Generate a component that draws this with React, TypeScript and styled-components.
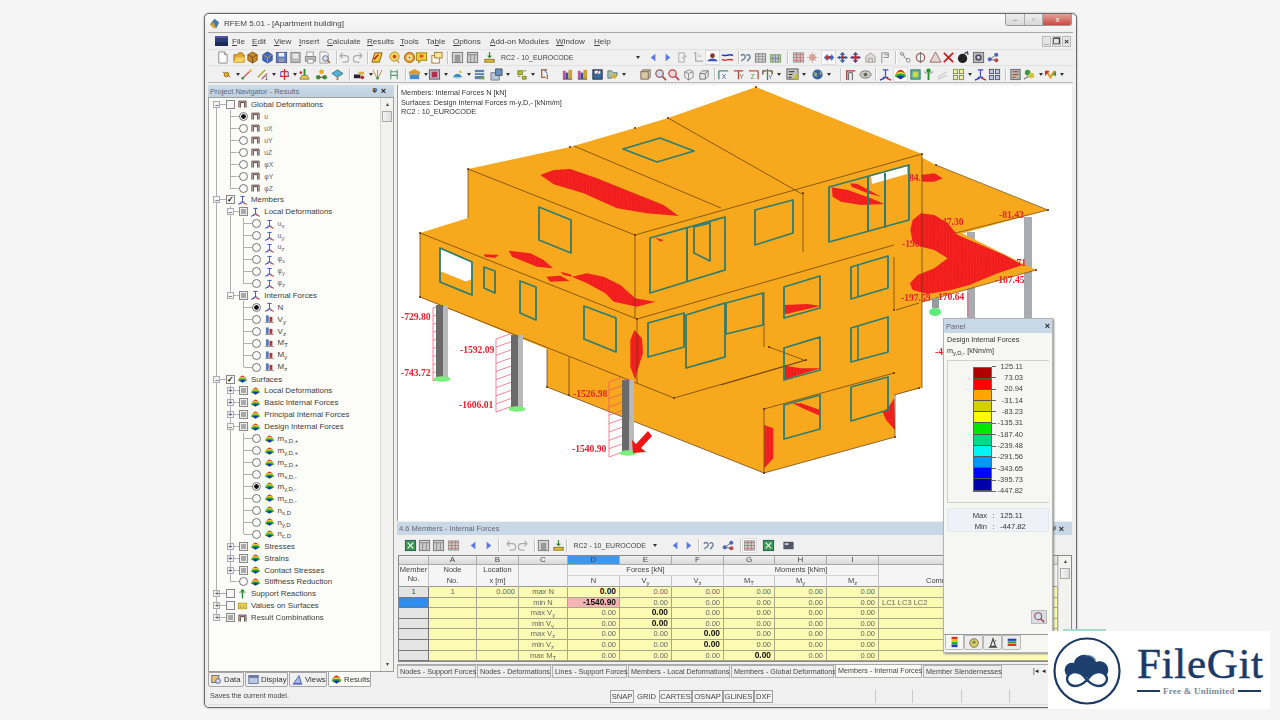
import React from "react";
import styled, { createGlobalStyle } from "styled-components";

const Global = createGlobalStyle`
  html, body { margin: 0; padding: 0; background: #f5f5f5; }
  * { box-sizing: border-box; }
`;

const Root = styled.div`
  position: relative;
  width: 1280px;
  height: 720px;
  overflow: hidden;
  padding: 13px 0 0 204px;
  font-family: "Liberation Sans", Arial, sans-serif;
  color: #333;
  filter: blur(0.3px);
`;
const Win = styled.div`
  width: 873px;
  height: 695px;
  border: 1px solid #6a6a6a;
  border-radius: 5px;
  background: #f0f0f0;
  display: flex;
  flex-direction: column;
  box-shadow: 0 0 2px #999;
`;
const TitleBar = styled.div`
  height: 18px;
  flex: none;
  display: flex;
  align-items: center;
  background: linear-gradient(#fbfbfb, #efefef);
  border-radius: 5px 5px 0 0;
  padding: 0 4px 0 3px;
  font-size: 8.1px;
  gap: 3px;
`;
const TitleIcon = styled.svg`
  width: 13px;
  height: 13px;
  flex: none;
`;
const TitleText = styled.span`
  flex: 1;
  color: #444;
`;
const Caption = styled.div`
  width: 67px;
  height: 12px;
  margin-top: -6px;
  display: flex;
  border: 1px solid #999;
  border-top: 0;
  border-radius: 0 0 3px 3px;
  overflow: hidden;
`;
const CapBtn = styled.span<{ $w: number; $red?: boolean }>`
  width: ${(p) => p.$w}px;
  flex: none;
  background: ${(p) => (p.$red ? "linear-gradient(#e8a09a,#c84a3e)" : "linear-gradient(#eee,#d8d8d8)")};
  border-right: 1px solid #aaa;
  color: ${(p) => (p.$red ? "#fff" : "#777")};
  font-size: 8px;
  line-height: 11px;
  text-align: center;
`;
const Inner = styled.div`
  flex: 1;
  min-height: 0;
  margin: 0 3px 0 3px;
  border-top: 1px solid #a8a8a8;
  display: flex;
  flex-direction: column;
`;
const MenuBar = styled.div`
  height: 16px;
  flex: none;
  display: flex;
  align-items: center;
  font-size: 8.1px;
  color: #444;
  padding-left: 7px;
`;
const MenuLogo = styled.span`
  width: 13px;
  height: 10px;
  background: linear-gradient(#2a3f7a 50%, #1c2a55 50%);
  border-top: 2px solid #55a;
  margin-right: 4px;
  flex: none;
`;
const MenuItem = styled.span<{ $w: number }>`
  width: ${(p) => p.$w}px;
  flex: none;
  white-space: nowrap;
  u { text-decoration: underline; }
`;
const MdiBtns = styled.div`
  margin-left: auto;
  display: flex;
  gap: 1px;
  margin-right: 2px;
`;
const MdiBtn = styled.span`
  width: 9px;
  height: 11px;
  background: #e4e4e4;
  border: 1px solid #bbb;
  font-size: 8px;
  line-height: 9px;
  text-align: center;
  color: #222;
  font-weight: bold;
`;
const ToolRow = styled.div<{ $h: number }>`
  height: ${(p) => p.$h}px;
  flex: none;
  display: flex;
  align-items: center;
  border-top: 1px solid #e2e2e2;
`;
const ToolSet = styled.div`
  display: flex;
  align-items: center;
  flex: none;
`;
const ToolSlot = styled.span<{ $on?: boolean }>`
  width: 13px;
  height: 13px;
  flex: none;
  display: block;
  background: ${(p) => (p.$on ? "#fbfbfb" : "transparent")};
  box-shadow: ${(p) => (p.$on ? "0 0 0 1px #ddd" : "none")};
  svg { display: block; width: 13px; height: 13px; }
`;
const Drop = styled.span`
  width: 0;
  height: 0;
  flex: none;
  border: 2px solid transparent;
  border-top: 3px solid #333;
  border-bottom: 0;
`;
const Sep = styled.span`
  width: 2px;
  height: 13px;
  flex: none;
  background: #c6c6c6;
  border-right: 1px solid #fff;
`;
const Combo = styled.div<{ $w: number }>`
  width: ${(p) => p.$w}px;
  height: 13px;
  flex: none;
  display: flex;
  align-items: center;
  justify-content: space-between;
  font-size: 7px;
  white-space: nowrap;
  color: #444;
  padding: 0 4px 0 5.5px;
`;

const Work = styled.div`
  flex: 1;
  min-height: 0;
  display: flex;
  gap: 3px;
  padding-top: 2px;
  border-top: 1px solid #b8b8b8;
`;
const Nav = styled.div`
  width: 186px;
  flex: none;
  display: flex;
  flex-direction: column;
`;
const NavHead = styled.div`
  height: 12px;
  flex: none;
  background: linear-gradient(#ccdbe8, #bfd0df);
  color: #667;
  font-size: 7.5px;
  display: flex;
  align-items: center;
  justify-content: space-between;
  padding: 0 4px 0 2px;
  b { color: #222; font-size: 9px; letter-spacing: 4px; }
`;
const TreeBox = styled.div`
  flex: 1;
  min-height: 0;
  background: #fcfcf8;
  border: 1px solid #a0a0a0;
  border-bottom: 0;
  display: flex;
`;
const Tree = styled.div`
  flex: 1;
  padding: 0.5px 0 0 1.3px;
  min-width: 0;
  font-size: 7.9px;
  color: #3c3c3c;
`;
const TreeRow = styled.div`
  height: 11.95px;
  display: flex;
  align-items: center;
  white-space: nowrap;
`;
const lineV = "linear-gradient(#b0b0b0,#b0b0b0)";
const cellBg: Record<string, string> = {
  v: `${lineV} 50% 0/1px 100% no-repeat`,
  T: `${lineV} 50% 0/1px 100% no-repeat, ${lineV} 100% 50%/50% 1px no-repeat`,
  L: `${lineV} 50% 0/1px 50% no-repeat, ${lineV} 100% 50%/50% 1px no-repeat`,
  m: `${lineV} 50% 0/1px 100% no-repeat, ${lineV} 100% 50%/50% 1px no-repeat`,
  p: `${lineV} 50% 0/1px 100% no-repeat, ${lineV} 100% 50%/50% 1px no-repeat`,
  M: `${lineV} 50% 100%/1px 50% no-repeat, ${lineV} 100% 50%/50% 1px no-repeat`,
  P: `${lineV} 50% 0/1px 50% no-repeat, ${lineV} 100% 50%/50% 1px no-repeat`,
  q: `${lineV} 50% 0/1px 50% no-repeat, ${lineV} 100% 50%/50% 1px no-repeat`,
  c: `${lineV} 0 50%/50% 1px no-repeat`,
  n: `${lineV} 0 50%/50% 1px no-repeat`,
  b: `${lineV} 0 50%/50% 1px no-repeat`,
  r: `${lineV} 0 50%/50% 1px no-repeat`,
  R: `${lineV} 0 50%/50% 1px no-repeat`,
  e: "none",
};
const TreeCell = styled.span<{ $t: string }>`
  width: 13.33px;
  height: 100%;
  flex: none;
  display: flex;
  align-items: center;
  justify-content: center;
  background: ${(p) => cellBg[p.$t]};
`;
const Expander = styled.span`
  width: 7px;
  height: 7px;
  border: 1px solid #aab;
  background: #f4f4f4;
  color: #667;
  font-size: 7px;
  line-height: 5px;
  text-align: center;
  font-weight: bold;
`;
const CheckBox = styled.span`
  width: 9px;
  height: 9px;
  border: 1px solid #8a8a8a;
  background: #f6f6f6;
  font-size: 8px;
  line-height: 7px;
  text-align: center;
  color: #111;
  font-weight: bold;
`;
const GrayBox = styled(CheckBox)`
  background: #a8a8a8;
  box-shadow: inset 0 0 0 1px #eee;
`;
const Radio = styled.span<{ $on?: boolean }>`
  width: 9px;
  height: 9px;
  border-radius: 50%;
  border: 1px solid #777;
  background: ${(p) => (p.$on ? "radial-gradient(circle,#111 0 2px,#f6f6f6 2.5px)" : "#fafafa")};
`;
const TreeIcon = styled.span`
  width: 11px;
  height: 10px;
  margin-right: 3px;
  flex: none;
  svg { display: block; width: 11px; height: 10px; }
`;
const TreeLabel = styled.span<{ $small?: boolean }>`
  font-size: ${(p) => (p.$small ? "6.8px" : "inherit")};
  color: ${(p) => (p.$small ? "#666" : "inherit")};
`;
const Sub = styled.span`
  font-size: 6px;
  vertical-align: -1.5px;
`;
const Scroll = styled.div`
  width: 13px;
  flex: none;
  background: #f2f2f0;
  border-left: 1px solid #d8d8d8;
  display: flex;
  flex-direction: column;
  align-items: center;
  padding: 3px 0;
  font-size: 6px;
  color: #444;
  line-height: 7px;
`;
const Thumb = styled.span`
  width: 10px;
  height: 11px;
  background: linear-gradient(90deg, #f4f4f4, #dcdcdc);
  border: 1px solid #aaa;
  margin-top: 3px;
`;
const ScrollEnd = styled.span`
  margin-top: auto;
`;
const NavTabs = styled.div`
  height: 17px;
  flex: none;
  display: flex;
  border-top: 1px solid #999;
  gap: 1px;
`;
const NavTab = styled.div<{ $w: number; $on?: boolean }>`
  width: ${(p) => p.$w}px;
  height: 15px;
  flex: none;
  display: flex;
  align-items: center;
  gap: 2px;
  font-size: 7.8px;
  padding-left: 2px;
  border: 1px solid #a5a5a5;
  border-top: ${(p) => (p.$on ? "0" : "1px solid #a5a5a5")};
  border-radius: 0 0 2px 2px;
  background: ${(p) => (p.$on ? "#fcfcf8" : "#f0f0f0")};
  svg { width: 11px; height: 11px; flex: none; }
`;

const Main = styled.div`
  width: 675px;
  flex: none;
  display: flex;
  flex-direction: column;
`;
const Viewport = styled.div`
  height: 436px;
  flex: none;
  background: #fff;
  border-left: 1px solid #9a9a9a;
  position: relative;
  overflow: hidden;
`;
const Scene = styled.svg`
  display: block;
  width: 675px;
  height: 436px;
`;
const ViewInfo = styled.div`
  position: absolute;
  left: 3px;
  top: 3px;
  font-size: 7.3px;
  line-height: 9.5px;
  color: #333;
`;
const TableHead = styled.div`
  height: 13px;
  margin-top: 1px;
  flex: none;
  background: #c8d8e6;
  color: #667;
  font-size: 7.5px;
  display: flex;
  align-items: center;
  justify-content: space-between;
  padding: 0 5px 0 2px;
  b { color: #222; font-size: 9px; letter-spacing: 3px; }
`;
const TableTools = styled.div`
  height: 20px;
  flex: none;
  display: flex;
  align-items: center;
`;
const TableWrap = styled.div`
  height: 107px;
  flex: none;
  display: flex;
  border: 1px solid #888;
  background: #fff;
  margin-left: 1px;
  overflow: hidden;
`;
const Sheet = styled.div`
  flex: 1;
  min-width: 0;
  font-size: 7.5px;
  color: #444;
`;
const COLS = "30px 48px 42px 49px 52px 52px 52px 51px 52px 52px 1fr";
const HeadGrid = styled.div`
  display: grid;
  grid-template-columns: ${COLS};
  grid-template-rows: 9px 11px 11px;
  background: #f5f5f5;
  border-bottom: 1px solid #999;
  height: 31px;
`;
const Letter = styled.div<{ $on?: boolean }>`
  grid-row: 1;
  background: ${(p) => (p.$on ? "#3d97ea" : "linear-gradient(#f0f0f0,#d9d9d9)")};
  border-right: 1px solid #aaa;
  border-bottom: 1px solid #aaa;
  text-align: center;
  line-height: 8px;
  font-size: 8px;
`;
const HeadCell = styled.div<{ $c: string; $r: string; $b?: boolean; $tight?: boolean }>`
  grid-column: ${(p) => p.$c};
  grid-row: ${(p) => p.$r};
  border-right: 1px solid #c4c4c4;
  ${(p) => (p.$b ? "border-bottom: 1px solid #d4d4d4;" : "")}
  text-align: center;
  line-height: ${(p) => (p.$tight ? "8.5px" : "10.5px")};
  padding-top: ${(p) => (p.$tight ? "1px" : "0")};
  white-space: nowrap;
  overflow: hidden;
`;
const CommentHead = styled(HeadCell)`
  text-align: left;
  padding-left: 47px;
`;
const DataRow = styled.div`
  display: grid;
  grid-template-columns: ${COLS};
  height: 10.6px;
`;
const RowHead = styled.div<{ $sel?: boolean }>`
  background: ${(p) => (p.$sel ? "#2f8ff0" : "#e4e4e4")};
  border-right: 1px solid #777;
  border-bottom: 1px solid #777;
  text-align: center;
  line-height: 9.6px;
`;
const DataCell = styled.div<{ $a?: string; $bold?: boolean; $pink?: boolean }>`
  background: ${(p) => (p.$pink ? "#f5b4b4" : "#fbfbb4")};
  border-right: 1px solid #a8a890;
  border-bottom: 1px solid #a8a890;
  text-align: ${(p) => p.$a || "right"};
  padding: 0 3px;
  line-height: 9.6px;
  font-size: ${(p) => (p.$bold ? "8.4px" : "7.5px")};
  font-weight: ${(p) => (p.$bold ? "bold" : "normal")};
  color: ${(p) => (p.$bold ? "#111" : "#666")};
  white-space: nowrap;
  overflow: hidden;
`;
const GridScroll = styled(Scroll)`
  width: 13px;
  padding-top: 2px;
`;
const SheetTabs = styled.div`
  height: 15px;
  flex: none;
  margin-top: 2px;
  display: flex;
  align-items: stretch;
  font-size: 7.2px;
  color: #444;
  gap: 1px;
  border-top: 1px solid #aaa;
`;
const SheetTab = styled.div<{ $w: number; $on?: boolean }>`
  width: ${(p) => p.$w}px;
  flex: none;
  height: 13px;
  line-height: 11px;
  white-space: nowrap;
  padding-left: 2px;
  border: 1px solid #b0b0b0;
  border-top: ${(p) => (p.$on ? "0" : "1px solid #b0b0b0")};
  background: ${(p) => (p.$on ? "#f8f8f4" : "#eeeeee")};
`;
const SheetNav = styled.div`
  margin-left: 30px;
  display: flex;
  gap: 3px;
  font-size: 7px;
  line-height: 12px;
  color: #222;
`;
const StatusBar = styled.div`
  height: 17px;
  flex: none;
  margin-top: auto;
  display: flex;
  align-items: center;
  font-size: 7.1px;
  color: #444;
  margin-bottom: 2px;
  border-bottom: 1px solid #ddd;
`;
const StatusText = styled.span`
  width: 402px;
  flex: none;
  padding-left: 2px;
`;
const StatusBtn = styled.span<{ $w: number; $flat?: boolean }>`
  width: ${(p) => p.$w}px;
  height: 13px;
  flex: none;
  text-align: center;
  line-height: 11px;
  font-size: 7.6px;
  border: 1px solid ${(p) => (p.$flat ? "transparent" : "#a0a0a0")};
  background: #f4f4f4;
`;
const StatusCell = styled.span<{ $w: number }>`
  width: ${(p) => p.$w}px;
  height: 13px;
  flex: none;
  border-right: 1px solid #c8c8c8;
`;

const Panel = styled.div`
  position: absolute;
  left: 943px;
  top: 318px;
  width: 110px;
  height: 335px;
  background: #f6f6f2;
  border: 1px solid #b4b4b4;
  box-shadow: 1px 1px 2px #888;
  display: flex;
  flex-direction: column;
`;
const PanelHead = styled.div`
  height: 14px;
  flex: none;
  background: #c8d8e6;
  color: #667;
  font-size: 7.6px;
  display: flex;
  align-items: center;
  justify-content: space-between;
  padding: 0 2px 0 2px;
  b { color: #222; font-size: 9px; }
`;
const PanelTitle = styled.div`
  padding: 1px 3px 0;
  font-size: 7.2px;
  line-height: 11px;
  color: #333;
  flex: none;
`;
const LegendBox = styled.div`
  height: 143px;
  margin: 1px 3px 0;
  flex: none;
  border: 1px solid #d0d0d0;
  border-right: 0;
  padding: 6px 0 0 25px;
  display: flex;
  gap: 0;
`;
const Bars = styled.div`
  width: 19px;
  height: 125px;
  border: 1px solid #666;
  display: flex;
  flex-direction: column;
  flex: none;
  margin-top: 0;
`;
const Bar = styled.div<{ $c: string }>`
  flex: 1;
  background: ${(p) => p.$c};
  border-bottom: 0.5px solid #555;
`;
const Values = styled.div`
  width: 45px;
  height: 135px;
  margin-top: -5px;
  display: flex;
  flex-direction: column;
  justify-content: space-between;
  flex: none;
  font-size: 7.5px;
  color: #444;
`;
const Value = styled.div`
  height: 10px;
  line-height: 10px;
  text-align: right;
  padding-right: 14px;
  white-space: nowrap;
  background: linear-gradient(#666, #666) 0 50%/4px 1px no-repeat;
`;
const MaxMin = styled.div`
  margin: 5px 3px 0;
  height: 24px;
  flex: none;
  background: #eef2f8;
  border: 1px solid #e4e8ee;
  display: grid;
  grid-template-columns: 39px 13px 1fr;
  font-size: 7.6px;
  line-height: 11px;
  padding-top: 1px;
  text-align: right;
  span:nth-child(3n) { text-align: left; }
  span:nth-child(3n + 2) { text-align: center; }
`;
const PanelFoot = styled.div`
  margin-top: auto;
  flex: none;
  display: flex;
  flex-direction: column;
`;
const ZoomBtn = styled.div`
  align-self: flex-end;
  width: 16px;
  height: 14px;
  margin: 0 5px 10px 0;
  background: #d8dce4;
  border: 1px solid #bbb;
  svg { display: block; width: 14px; height: 12px; }
`;
const PanelTabs = styled.div`
  height: 16px;
  border-top: 1px solid #999;
  display: flex;
  padding-left: 1px;
  margin-bottom: 2px;
`;
const PanelTab = styled.div<{ $on?: boolean }>`
  width: 19px;
  height: 15px;
  flex: none;
  border: 1px solid #b8b8b8;
  border-top: ${(p) => (p.$on ? "0" : "1px solid #b8b8b8")};
  border-radius: 0 0 2px 2px;
  background: ${(p) => (p.$on ? "#f6f6f2" : "#ededed")};
  display: flex;
  align-items: center;
  justify-content: center;
  svg { width: 12px; height: 12px; }
`;

const LogoBox = styled.div`
  position: absolute;
  left: 1048px;
  top: 631px;
  width: 222px;
  height: 78px;
  background: #fff;
  display: flex;
  align-items: center;
  padding-left: 4px;
  &::before {
    content: "";
    position: absolute;
    left: 15px;
    top: -2px;
    width: 43px;
    height: 2px;
    background: #a5dccd;
  }
`;
const LogoMark = styled.svg`
  width: 70px;
  height: 70px;
  flex: none;
  margin-right: 15px;
`;
const LogoText = styled.div`
  color: #1b3a66;
  font-family: "Liberation Serif", serif;
  margin-top: -2px;
`;
const LogoName = styled.div`
  font-size: 43px;
  line-height: 44px;
  letter-spacing: 0.7px;
  -webkit-text-stroke: 0.5px #1b3a66;
`;
const LogoTag = styled.div`
  display: flex;
  align-items: center;
  gap: 3px;
  font-size: 9px;
  line-height: 11px;
  font-weight: bold;
  color: #7d8796;
  letter-spacing: 0.25px;
  i { width: 23px; height: 2px; background: #1b3a66; flex: none; }
`;

/* ------------- icons ------------- */
const icons: Record<string, React.ReactNode> = {
  doc: <><path d="M3 1h6l3 3v9H3z" fill="#fff" stroke="#888" /><path d="M9 1v3h3" fill="none" stroke="#888" /></>,
  folder: <><path d="M1 4h4l1-2h4v2h2v8H1z" fill="#e8a830" stroke="#a87818" /><path d="M1 12l2-5h10l-2 5z" fill="#f8d060" /></>,
  cube: <><path d="M2 4l5-3 5 3v6l-5 3-5-3z" fill="#c88828" stroke="#8a5a18" /><path d="M2 4l5 3 5-3M7 7v6" fill="none" stroke="#7a4a10" /></>,
  cubeb: <><path d="M2 4l5-3 5 3v6l-5 3-5-3z" fill="#4468c0" stroke="#2a4488" /><path d="M2 4l5 3 5-3M7 7v6" fill="none" stroke="#c8a030" /></>,
  save: <><rect x="1.5" y="1.5" width="11" height="11" fill="#5a80c8" stroke="#4a5a90" /><rect x="4" y="2" width="6" height="4" fill="#f0f0f0" /><rect x="4" y="8" width="6" height="4" fill="#99a" /></>,
  tray: <><rect x="2" y="1.5" width="10" height="11" fill="#bbb" stroke="#888" /><rect x="4" y="3" width="6" height="5" fill="#e8e8e8" /></>,
  print: <><rect x="3" y="1" width="7" height="5" fill="#f5f5f5" stroke="#999" /><rect x="1.5" y="6" width="11" height="5" fill="#bbb" stroke="#888" /><rect x="4" y="9" width="6" height="4" fill="#fff" stroke="#999" /></>,
  prev: <><path d="M2 1h7l2 2v10H2z" fill="#f4f4f4" stroke="#999" /><circle cx="8" cy="8" r="3" fill="#cfe0f5" stroke="#667" /><path d="M10 10l3 3" stroke="#a62" strokeWidth="1.5" /></>,
  undo: <path d="M3 5h6a3 3 0 010 7H6M3 5l3-3M3 5l3 3" fill="none" stroke="#aaa" strokeWidth="1.3" />,
  redo: <path d="M11 5H5a3 3 0 000 7h3M11 5L8 2M11 5L8 8" fill="none" stroke="#aaa" strokeWidth="1.3" />,
  pen: <><path d="M4 2h8l-3 10H1z" fill="#f0c838" stroke="#8a5a20" /><path d="M3 9l5-5" stroke="#c02020" strokeWidth="1.6" /></>,
  bubble: <><circle cx="7" cy="6" r="5" fill="#f0d860" stroke="#b09020" /><circle cx="7" cy="6" r="2" fill="#e04020" /><path d="M10 10l2 3" stroke="#a62" /></>,
  target: <><circle cx="7" cy="7" r="5.5" fill="#e8a030" stroke="#a06010" /><circle cx="7" cy="7" r="3" fill="#f8e8b0" /><circle cx="7" cy="7" r="1.2" fill="#7a8a20" /></>,
  note: <><rect x="1.5" y="2" width="11" height="8" fill="#f0d040" stroke="#a08010" /><path d="M4 10v3l3-3" fill="#f0d040" stroke="#a08010" /><rect x="5" y="4" width="4" height="3" fill="#e05020" /></>,
  win: <><rect x="2" y="5" width="8" height="8" fill="#fff" stroke="#a87828" /><rect x="5" y="1.5" width="8" height="6" fill="#f8e8a0" stroke="#a87828" /></>,
  tbl: <><rect x="1.5" y="1.5" width="11" height="11" fill="#d8d8d8" stroke="#777" /><rect x="4" y="4" width="6" height="8" fill="#999" /></>,
  tbl2: <><rect x="1.5" y="1.5" width="11" height="11" fill="#ccc" stroke="#777" /><path d="M1.5 4h11M5 4v8M9 4v8" stroke="#888" /></>,
  lc: <><path d="M7 1v6M5 5l2 2 2-2" stroke="#3a8a30" fill="none" strokeWidth="1.3" /><rect x="2" y="9" width="10" height="3" fill="#e8c040" stroke="#88701a" /></>,
  al: <path d="M9 3L4 7l5 4z" fill="#5a78e0" />,
  ar: <path d="M5 3l5 4-5 4z" fill="#5a78e0" />,
  page: <><path d="M3 2h6v10H3z" fill="#eee" stroke="#aaa" /><path d="M7 8l4-3" stroke="#bbb" strokeWidth="2" /></>,
  pageb: <><path d="M3 2h2v9h8" fill="none" stroke="#aaa" strokeWidth="1.3" /><text x="7" y="6" fontSize="4" fill="#999">1x</text></>,
  eye: <><circle cx="7" cy="5" r="2.5" fill="#8a3030" /><path d="M1 11c3-4 9-4 12 0z" fill="#3a50c0" /></>,
  wave: <><path d="M1 4c3 3 8-2 12 1" stroke="#2030c0" fill="none" strokeWidth="1.5" /><path d="M1 9c3 3 8-2 12 1" stroke="#d03030" fill="none" strokeWidth="1.5" /></>,
  link: <path d="M2 5c3-3 6 1 4 3s-3 1-3 3M8 5c2-2 4-1 4 2l-3 4" stroke="#6a7f9a" fill="none" strokeWidth="1.5" />,
  grid1: <><rect x="1.5" y="3" width="11" height="9" fill="#c8d4e8" stroke="#8a7a60" /><path d="M1.5 6h11M1.5 9h11M5 3v9M9 3v9" stroke="#8a7a60" strokeWidth=".6" /></>,
  grid2: <><rect x="1.5" y="4" width="11" height="8" fill="#b8c8e0" stroke="#7a5" /><path d="M4 4v8M7 4v8M10 4v8M1.5 8h11" stroke="#765" strokeWidth=".7" /></>,
  gridg: <><rect x="1.5" y="2" width="11" height="10" fill="#ccc" stroke="#999" /><path d="M1.5 4h11M1.5 7h11M1.5 10h11M5 2v10M9 2v10" stroke="#b33" strokeWidth=".5" /></>,
  sun: <><circle cx="7" cy="7" r="3" fill="#e8c8b0" stroke="#b88" /><path d="M7 1v12M1 7h12M3 3l8 8M11 3l-8 8" stroke="#c88" strokeWidth=".6" /></>,
  move: <><path d="M2 7l4-4v2h4V3l3 4-3 4V9H6v2z" fill="#3a68b8" /><circle cx="6" cy="7" r="2" fill="#d03030" /></>,
  mv2: <><path d="M7 1l3 3H8v2h2V5l3 2-3 2V8H8v2h2l-3 3-3-3h2V8H4v1L1 7l3-2v1h2V4H4z" fill="#3a5a98" /><circle cx="7" cy="7" r="1.5" fill="#c03030" /></>,
  mv3: <><path d="M7 1l3 3H8v2h2V5l3 2-3 2V8H8v2h2l-3 3-3-3h2V8H4v1L1 7l3-2v1h2V4H4z" fill="#5a3a78" /><circle cx="7" cy="7" r="2" fill="#d03030" /></>,
  house: <><path d="M2 12V6l5-4 5 4v6z" fill="#ddd" stroke="#a99" /><path d="M5 12V8h4v4" fill="none" stroke="#a99" /></>,
  flag: <><path d="M3 13V2h7v5H5" fill="#eee" stroke="#888" /><path d="M6 4h4" stroke="#888" /></>,
  curve: <><path d="M2 2c3 0 3 3 4 5s4 1 5 4" fill="none" stroke="#777" /><circle cx="3" cy="3" r="1.5" fill="#fff" stroke="#777" /><circle cx="10" cy="10" r="2" fill="#fff" stroke="#777" /></>,
  ring: <><circle cx="7" cy="7" r="4.5" fill="none" stroke="#a06060" strokeWidth="1.3" /><path d="M7 1v12" stroke="#707070" /></>,
  warn: <path d="M7 1l6 11H1z" fill="#e0d8d0" stroke="#a06060" />,
  cross: <path d="M2 2l10 10M12 2L2 12" stroke="#d02020" strokeWidth="2" />,
  ball: <><circle cx="6" cy="8" r="5" fill="#222" /><path d="M8 3l3-2 1 3" fill="none" stroke="#445" strokeWidth="1.5" /></>,
  cdrom: <><rect x="1.5" y="1.5" width="11" height="11" fill="#bbb" stroke="#667" /><circle cx="7" cy="7" r="3.5" fill="#556" /><circle cx="7" cy="7" r="1.5" fill="#dde" /></>,
  nodes: <><circle cx="3" cy="9" r="2.2" fill="#4868c8" /><circle cx="10" cy="4" r="2.2" fill="#4868c8" /><circle cx="10" cy="10" r="2.2" fill="#d04040" /><path d="M3 9l7-5M3 9l7 1" stroke="#667" /></>,
  dot: <><circle cx="7" cy="7" r="2.5" fill="#d8b020" stroke="#987010" /><path d="M3 4l2 2M11 10l-2-2" stroke="#d03030" /></>,
  slash: <><path d="M2 12L12 2" stroke="#c04040" strokeWidth="1.4" /><circle cx="11" cy="3" r="1.5" fill="#e8c030" /><circle cx="3" cy="11" r="1.5" fill="#3a9a40" /></>,
  slash2: <><path d="M2 10L10 2" stroke="#a0a020" strokeWidth="1.4" /><path d="M6 12l6-6" stroke="#c04040" strokeWidth="1.2" /><text x="10" y="13" fontSize="5" fill="#223">1</text></>,
  redt: <><path d="M7 1v12M3 4h8M2 9h10" stroke="#d03030" strokeWidth="1.4" /><path d="M3 4v5M11 4v5" stroke="#3a50c0" /></>,
  yb: <><path d="M7 1v7" stroke="#2a8a30" strokeWidth="2" /><path d="M2 12h10l-2-4H4z" fill="#e8c840" stroke="#886" /><circle cx="3" cy="5" r="1.5" fill="#d03030" /></>,
  ygr: <><circle cx="3.5" cy="10" r="2.5" fill="#3a9a40" /><circle cx="10.5" cy="10" r="2.5" fill="#3a9a40" /><circle cx="7" cy="4" r="2.5" fill="#d8b020" /><path d="M3 10h8" stroke="#a03030" /></>,
  teal: <><path d="M1 6l6-4 6 4-6 4z" fill="#58b0d0" stroke="#3a7890" /><path d="M7 10v3" stroke="#b08030" strokeWidth="2" /></>,
  mach: <><rect x="1" y="7" width="7" height="4" fill="#223" /><path d="M6 4h6v3H6z" fill="#d8b030" /><circle cx="10" cy="10" r="2" fill="#c03030" /></>,
  star: <><path d="M2 2l4 8M7 2v8M12 2l-4 8" stroke="#b89030" /><circle cx="7" cy="11" r="1.5" fill="#3a9a40" /></>,
  tower: <><path d="M3 12V2M10 12V2M3 4h7M3 8h7" stroke="#5a9a70" strokeWidth="1.2" /></>,
  dl: <><path d="M1 4l6-3 6 3v3H1z" fill="#d8a030" /><rect x="2" y="7" width="10" height="5" fill="#4a88c8" /></>,
  sq: <><rect x="1.5" y="2" width="11" height="10" fill="#b8b8c8" stroke="#557" /><rect x="4" y="4" width="6" height="6" fill="#b03048" /></>,
  wrench: <><path d="M2 10c3-5 7-5 10 0" fill="#3a90c0" /><path d="M2 10c3 2 7 2 10 0" fill="#b0c8d8" /><circle cx="10" cy="4" r="1.4" fill="#d8c030" /></>,
  cap: <><rect x="2" y="2" width="10" height="10" fill="#5a80b0" /><path d="M2 5h10M2 8h10" stroke="#fff" /><path d="M9 7l4 5H8z" fill="#7a9a40" /></>,
  hat: <><path d="M1 5h9v8H1z" fill="#b8c8d8" stroke="#778" /><path d="M6 1h7v7H6z" fill="#6a90c0" stroke="#456" /></>,
  grn: <><path d="M3 3h5v4H3zM9 3h3M3 9h3M8 9h4v3H8z" fill="#b8c038" stroke="#7a8020" /></>,
  hook: <><path d="M3 2l7 0M4 2v8h4M10 7v5" stroke="#a06030" strokeWidth="1.3" fill="none" /><path d="M7 2l3 4" stroke="#3050b0" /></>,
  people: <><rect x="2" y="3" width="3" height="9" fill="#c050a0" /><rect x="5" y="5" width="3" height="7" fill="#3050b0" /><rect x="8" y="2" width="4" height="10" fill="#d0a030" /><path d="M2 12h10" stroke="#555" /></>,
  disk: <><rect x="2" y="2" width="10" height="10" fill="#3a6aa0" stroke="#224" /><rect x="4" y="3" width="6" height="3" fill="#fff" /><path d="M2 10l8-8" stroke="#d03030" /></>,
  mix: <><path d="M2 3h4l2 2h4v3H8l-2 3H2z" fill="#a8c0a0" stroke="#678" /><circle cx="9" cy="9" r="2.5" fill="#d8b030" /></>,
  box3d: <><path d="M2 4h8v8H2zM2 4l2-2h8l-2 2M10 12l2-2V2" fill="#d8c8a0" stroke="#765" /></>,
  zoom: <><circle cx="6" cy="6" r="4" fill="#d0e0f0" stroke="#a05050" strokeWidth="1.3" /><path d="M9 9l4 4" stroke="#a05050" strokeWidth="1.8" /></>,
  zoomr: <><circle cx="6" cy="6" r="4" fill="#f0d8d8" stroke="#c04040" strokeWidth="1.3" /><path d="M9 9l4 4" stroke="#c04040" strokeWidth="1.8" /></>,
  cube3: <><path d="M3 4l5-2 4 2v6l-5 3-4-3z" fill="#eee" stroke="#888" /><path d="M3 4l4 2 5-2M7 6v7" fill="none" stroke="#888" /></>,
  cube4: <><path d="M3 6h6v6H3zM3 6l3-3h6l-3 3M9 12l3-3V3" fill="#e8e8e8" stroke="#777" /></>,
  rx: <><path d="M2 3h10M2 3v9" stroke="#4a8f78" strokeWidth="1.4" /><text x="5" y="12" fontSize="7" fill="#3a5a9a">X</text></>,
  ry: <><path d="M2 3h10M7 3v9" stroke="#c04040" strokeWidth="1.4" /><text x="8" y="12" fontSize="7" fill="#9a5a3a">Y</text></>,
  rz: <><path d="M2 3h10M12 3v9" stroke="#c05040" strokeWidth="1.4" /><text x="4" y="12" fontSize="7" fill="#5a9a3a">Z</text></>,
  rxyz: <><path d="M2 3h4M8 3h4M2 3v4M12 3v4" stroke="#6a4a2a" strokeWidth="1.4" /><path d="M7 1v12" stroke="#3a8a50" strokeWidth="1.4" /><text x="8" y="12" fontSize="6" fill="#33a">Y</text></>,
  ybox: <><rect x="1" y="1" width="12" height="11" fill="#c8c8b8" stroke="#556" /><path d="M3 4h6M3 7h4M3 10h3" stroke="#223" /><path d="M7 12L13 4v8z" fill="#c8c020" /></>,
  globe: <><circle cx="7" cy="7" r="5.5" fill="#3a60a0" /><path d="M3 4l4 2-1 4-3-2zM9 3l3 3-2 2z" fill="#88a888" /></>,
  frame2: <><path d="M3 13V3h9" stroke="#a03030" fill="none" strokeWidth="1.4" /><path d="M5 13V5h4v8" stroke="#555" fill="none" /></>,
  eyeg: <><ellipse cx="7" cy="7" rx="6" ry="4" fill="#c8c8c0" stroke="#777" /><circle cx="7" cy="7" r="2" fill="#665" /></>,
  mem: <><path d="M4 2h6M7 2v8M4 10h6" stroke="#4050c0" strokeWidth="1.3" /><path d="M1 13l5-2" stroke="#3030b0" strokeWidth="1.4" /><path d="M8 11l5 2" stroke="#d02020" strokeWidth="1.4" /></>,
  surf: <><path d="M1 9c1-4 4-7 6-7s5 3 6 7l-6 3z" fill="#e02818" /><path d="M1 9c1-3 3-5 6-5s5 2 6 5l-6 3z" fill="#f0d020" /><path d="M1 9c1-2 3-3 6-3s5 1 6 3l-6 3z" fill="#20b040" /><path d="M3 9l4-1 4 1-4 3z" fill="#1030c0" /></>,
  tealbox: <><rect x="2" y="2" width="10" height="10" fill="#60b8a0" stroke="#3a7060" /><circle cx="7" cy="7" r="3" fill="#d8d840" /></>,
  sup: <><path d="M7 5v8" stroke="#2a8a30" strokeWidth="2" /><circle cx="7" cy="3" r="2.5" fill="#2a9a30" /><path d="M2 4l3 2M12 4L9 6" stroke="#808080" /></>,
  line: <path d="M2 10l10-6M2 12l10-4" stroke="#ccc" strokeWidth="1.3" />,
  grn2: <><rect x="1.5" y="1.5" width="4.5" height="4.5" fill="#f0f0a0" stroke="#7a9a20" /><rect x="8" y="1.5" width="4.5" height="4.5" fill="#f0f0a0" stroke="#7a9a20" /><rect x="1.5" y="8" width="4.5" height="4.5" fill="#f0f0a0" stroke="#7a9a20" /><rect x="8" y="8" width="4.5" height="4.5" fill="#f0f0a0" stroke="#7a9a20" /></>,
  gridbl: <><rect x="1.5" y="1.5" width="4.5" height="4.5" fill="#b8c8e8" stroke="#556" /><rect x="8" y="1.5" width="4.5" height="4.5" fill="#b8c8e8" stroke="#556" /><rect x="1.5" y="8" width="4.5" height="4.5" fill="#b8c8e8" stroke="#556" /><rect x="8" y="8" width="4.5" height="4.5" fill="#b8c8e8" stroke="#556" /></>,
  sheet: <><rect x="2" y="1.5" width="10" height="11" fill="#b0b8a8" stroke="#667" /><path d="M4 4h6M4 7h6M4 10h3" stroke="#c03030" /></>,
  col: <><circle cx="5" cy="5" r="3" fill="#3a9a40" /><circle cx="9" cy="8" r="3" fill="#d8c030" /><path d="M1 12l5-3" stroke="#888" strokeWidth="1.5" /></>,
  vsym: <><path d="M1 3l6 9 6-9-3 0-3 5-3-5z" fill="#e0a020" /><path d="M1 3h5L1 9z" fill="#d03030" /><path d="M13 3v6l-4-2z" fill="#3a9a40" /></>,
  frame: <path d="M2 12V3h10v9M4 12V5h6v7" fill="none" stroke="#402020" strokeWidth="1.2" />,
  val: <><rect x="1" y="3" width="12" height="8" fill="#e8d850" stroke="#a89020" /><text x="2" y="9.5" fontSize="6" fill="#a06020">1.2</text></>,
  data: <><rect x="1" y="2" width="9" height="9" fill="#f0c060" stroke="#4060a0" /><circle cx="9" cy="9" r="3" fill="#cfe0f5" stroke="#405080" /></>,
  disp: <><rect x="1" y="2" width="12" height="10" fill="#b8c8e0" stroke="#5a6a90" /><rect x="1" y="2" width="12" height="3" fill="#6a7aa8" /></>,
  views: <><path d="M2 12L9 2l3 10z" fill="#a8b8e8" stroke="#3a4ab0" /><path d="M1 13h12" stroke="#3a4ab0" /></>,
  xl: <><rect x="1.5" y="1.5" width="11" height="11" fill="#3a9a50" stroke="#256" /><path d="M4 4l6 6M10 4l-6 6" stroke="#fff" strokeWidth="1.2" /></>,
  calc: <><rect x="1.5" y="3" width="11" height="8" fill="#556" /><rect x="3" y="4.5" width="4" height="2" fill="#ccd" /></>,
  rainbow: <><rect x="3" y="1" width="7" height="3" fill="#e03020" /><rect x="3" y="4" width="7" height="3" fill="#f0c020" /><rect x="3" y="7" width="7" height="3" fill="#20b040" /><rect x="3" y="10" width="7" height="3" fill="#2040c0" /></>,
  lines4: <><rect x="2" y="2" width="10" height="2.5" fill="#2040c0" /><rect x="2" y="5" width="10" height="2.5" fill="#30a040" /><rect x="2" y="8" width="10" height="2.5" fill="#e03020" /></>,
  bars2: <><rect x="2" y="2" width="4" height="9" fill="#5a7ab0" /><rect x="7" y="4" width="4" height="7" fill="#c03030" /><path d="M1 12h12" stroke="#666" /></>,
  hand: <><path d="M2 12h10M7 2l3 9H4z" fill="none" stroke="#444" strokeWidth="1.3" /><path d="M8 6l3-2" stroke="#555" /></>,
  ochre: <><circle cx="7" cy="7" r="5" fill="#d8d060" stroke="#665" /><circle cx="7" cy="6" r="2" fill="#886" /></>,
};

const Icon = ({ k }: { k: string }) => <svg viewBox="0 0 14 14">{icons[k]}</svg>;

type Tool = [number, string];
const endOf = ([x, k]: Tool) => (k === "|" ? x + 2 : k === "v" ? x + 4 : x + 6.5);
const Tools = ({ from, items, on = [] }: { from: number; items: Tool[]; on?: string[] }) => (
  <ToolSet>
    {items.map((item, i) => {
      const [x, k] = item;
      const start = k === "|" || k === "v" ? x : x - 6.5;
      const left = i === 0 ? from : endOf(items[i - 1]);
      const style = { marginLeft: `${start - left}px` };
      if (k === "|") return <Sep key={i} style={style} />;
      if (k === "v") return <Drop key={i} style={style} />;
      return (
        <ToolSlot key={i} style={style} $on={on.includes(k)}>
          <Icon k={k} />
        </ToolSlot>
      );
    })}
  </ToolSet>
);

const t1a: Tool[] = [[222,"doc"],[239,"folder"],[252,"cube"],[267,"cubeb"],[281,"save"],[295,"tray"],[310,"print"],[324,"prev"],[336,"|"],[343,"undo"],[358,"redo"],[367,"|"],[377,"pen"],[394,"bubble"],[409,"target"],[421,"note"],[436,"win"],[447,"|"],[457,"tbl"],[472,"tbl2"],[489,"lc"]];
const t1b: Tool[] = [[653,"al"],[667,"ar"],[682,"page"],[697,"pageb"],[712,"eye"],[727,"wave"],[738,"|"],[745,"link"],[760,"grid1"],[775,"grid2"],[787,"|"],[798,"gridg"],[812,"sun"],[828,"move"],[842,"mv2"],[855,"mv3"],[870,"house"],[885,"flag"],[895,"|"],[905,"curve"],[920,"ring"],[935,"warn"],[948,"cross"],[963,"ball"],[978,"cdrom"],[993,"nodes"]];
const t2: Tool[] = [[226,"dot"],[236,"v"],[246,"slash"],[262,"slash2"],[272,"v"],[284,"redt"],[293,"v"],[304,"yb"],[321,"ygr"],[337,"teal"],[349,"|"],[359,"mach"],[369,"v"],[377,"star"],[394,"tower"],[405,"|"],[414,"dl"],[424,"v"],[434,"sq"],[444,"v"],[457,"wrench"],[467,"v"],[479,"cap"],[496,"hat"],[506,"v"],[521,"grn"],[531,"v"],[544,"hook"],[567,"people"],[582,"people"],[597,"disk"],[612,"mix"],[622,"v"],[645,"box3d"],[660,"zoom"],[673,"zoomr"],[688,"cube3"],[703,"cube4"],[714,"|"],[723,"rx"],[738,"ry"],[753,"rz"],[767,"rxyz"],[777,"v"],[792,"ybox"],[802,"v"],[817,"globe"],[827,"v"],[840,"|"],[850,"frame2"],[865,"eyeg"],[875,"|"],[885,"mem"],[900,"surf"],[915,"tealbox"],[928,"sup"],[942,"line"],[958,"grn2"],[968,"v"],[980,"mem"],[994,"gridbl"],[1005,"|"],[1015,"sheet"],[1029,"col"],[1039,"v"],[1050,"vsym"],[1060,"v"]];
const t3a: Tool[] = [[410,"xl"],[424,"tbl2"],[438,"tbl2"],[453,"gridg"],[473,"al"],[488,"ar"],[498,"|"],[510,"undo"],[523,"redo"],[534,"|"],[543,"tbl"],[558,"lc"],[566,"|"]];
const t3b: Tool[] = [[675,"al"],[688,"ar"],[698,"|"],[708,"link"],[728,"nodes"],[740,"|"],[749,"gridg"],[768,"xl"],[788,"calc"]];

const menu: [string, string, string, number][] = [
  ["", "F", "ile", 20], ["", "E", "dit", 22], ["", "V", "iew", 25], ["", "I", "nsert", 28], ["", "C", "alculate", 40],
  ["", "R", "esults", 33], ["", "T", "ools", 26], ["Ta", "b", "le", 27], ["", "O", "ptions", 37], ["", "A", "dd-on Modules", 66],
  ["", "W", "indow", 38], ["", "H", "elp", 24],
];

/* ------------- tree ------------- */
type Node = { c: string; i?: string; l: string; s?: string; small?: boolean };
const rad = (prefix: string, i: string, l: string, s?: string, last?: boolean, on?: boolean, small = true): Node => ({
  c: `${prefix} ${last ? "L" : "T"} ${on ? "R" : "r"}`, i, l, s, small,
});
const tree: Node[] = [
  { c: "M c", i: "frame", l: "Global Deformations" },
  rad("v", "frame", "u", "", false, true),
  rad("v", "frame", "uX"), rad("v", "frame", "uY"), rad("v", "frame", "uZ"),
  rad("v", "frame", "φX"), rad("v", "frame", "φY"), rad("v", "frame", "φZ", "", true),
  { c: "m k", i: "mem", l: "Members" },
  { c: "v m b", i: "mem", l: "Local Deformations" },
  ...["x", "y", "z"].map((s) => rad("v v", "mem", "u", s)),
  ...["x", "y"].map((s) => rad("v v", "mem", "φ", s)),
  rad("v v", "mem", "φ", "z", true),
  { c: "v q b", i: "mem", l: "Internal Forces" },
  rad("v e", "mem", "N", "", false, true, false),
  rad("v e", "bars2", "V", "y", false, false, false),
  rad("v e", "bars2", "V", "z", false, false, false),
  rad("v e", "bars2", "M", "T", false, false, false),
  rad("v e", "bars2", "M", "y", false, false, false),
  rad("v e", "bars2", "M", "z", true, false, false),
  { c: "m k", i: "surf", l: "Surfaces" },
  { c: "v p b", i: "surf", l: "Local Deformations" },
  { c: "v p b", i: "surf", l: "Basic Internal Forces" },
  { c: "v p b", i: "surf", l: "Principal Internal Forces" },
  { c: "v m b", i: "surf", l: "Design Internal Forces" },
  rad("v v", "surf", "m", "x,D,+", false, false, false),
  rad("v v", "surf", "m", "y,D,+", false, false, false),
  rad("v v", "surf", "m", "c,D,+", false, false, false),
  rad("v v", "surf", "m", "x,D,-", false, false, false),
  rad("v v", "surf", "m", "y,D,-", false, true, false),
  rad("v v", "surf", "m", "c,D,-", false, false, false),
  rad("v v", "surf", "n", "x,D", false, false, false),
  rad("v v", "surf", "n", "y,D", false, false, false),
  rad("v v", "surf", "n", "c,D", true, false, false),
  { c: "v p b", i: "surf", l: "Stresses" },
  { c: "v p b", i: "surf", l: "Strains" },
  { c: "v p b", i: "surf", l: "Contact Stresses" },
  { c: "v L r", i: "surf", l: "Stiffness Reduction" },
  { c: "p c", i: "sup", l: "Support Reactions" },
  { c: "p c", i: "val", l: "Values on Surfaces" },
  { c: "P b", i: "frame", l: "Result Combinations" },
];

const TreeCellView = ({ t }: { t: string }) => {
  const type = t === "k" ? "c" : t;
  return (
    <TreeCell $t={type}>
      {(t === "m" || t === "M" || t === "q") && <Expander>–</Expander>}
      {(t === "p" || t === "P") && <Expander>+</Expander>}
      {t === "c" && <CheckBox />}
      {t === "k" && <CheckBox>✓</CheckBox>}
      {t === "b" && <GrayBox />}
      {t === "r" && <Radio />}
      {t === "R" && <Radio $on />}
    </TreeCell>
  );
};

/* ------------- table ------------- */
const S = ({ t }: { t: string }) => {
  const m = t.match(/^(.*?)_(.*)$/);
  if (!m) return <>{t}</>;
  return <>{m[1]}<Sub>{m[2]}</Sub></>;
};
const rowsData: { c: string; b: number; v0?: string; pink?: boolean }[] = [
  { c: "max N", b: 0 },
  { c: "min N", b: 0, v0: "-1540.90", pink: true },
  { c: "max V_y", b: 1 },
  { c: "min V_y", b: 1 },
  { c: "max V_z", b: 2 },
  { c: "min V_z", b: 2 },
  { c: "max M_T", b: 3 },
];

const legendColors = ["#b00000", "#ff0000", "#ffa500", "#d4d000", "#ffff00", "#00e800", "#00d890", "#00f4f4", "#0098f8", "#0000ff", "#0000a8"];
const legendVals = ["125.11", "73.03", "20.94", "-31.14", "-83.23", "-135.31", "-187.40", "-239.48", "-291.56", "-343.65", "-395.73", "-447.82"];

const tabsSheet: [string, number, boolean?][] = [
  ["Nodes - Support Forces", 79], ["Nodes - Deformations", 74], ["Lines - Support Forces", 75],
  ["Members - Local Deformations", 102], ["Members - Global Deformations", 103], ["Members - Internal Forces", 87, true], ["Member Slendernesses", 79],
];

/* ------------- building ------------- */
const RED = "url(#redgrid)";
const Win3D = ({ p, fill = "none" }: { p: string; fill?: string }) => (
  <polygon points={p} fill={fill} stroke="#2f7d70" strokeWidth="1.8" strokeLinejoin="round" />
);
const Hatch = ({ x, y1, y2, n, dx }: { x: number; y1: number; y2: number; n: number; dx: number }) => (
  <g stroke="#ee5068" strokeWidth="0.7" fill="none">
    <path d={`M${x} ${y1}V${y2}`} />
    {Array.from({ length: n + 1 }, (_, i) => {
      const y = y1 + ((y2 - y1) * i) / n;
      return <path key={i} d={`M${x} ${y}l${dx} ${-dx * 0.36}`} />;
    })}
  </g>
);
const Column = ({ x, y1, y2, w = 12 }: { x: number; y1: number; y2: number; w?: number }) => (
  <g>
    <rect x={x} y={y1} width={w * 0.62} height={y2 - y1} fill="#6a6a6a" />
    <rect x={x + w * 0.62} y={y1} width={w * 0.38} height={y2 - y1} fill="#b9b9b9" />
    <ellipse cx={x + w / 2} cy={y2 + 1} rx={w * 0.72} ry="2.8" fill="#7cf07c" />
  </g>
);
const FarColumn = ({ x, y1, y2 }: { x: number; y1: number; y2: number }) => (
  <rect x={x} y={y1} width={8} height={y2 - y1} fill="#a8acb0" />
);
const Lab = ({ x, y, t }: { x: number; y: number; t: string }) => (
  <text x={x} y={y} fontFamily="'Liberation Serif',serif" fontWeight="bold" fontSize="9.6" fill="#e8202c">{t}</text>
);
const lines = [
  "467,169 634,235 921,154", "634,235 634,318", "419,233 636,319 893,245", "467,169 467,218", "419,233 419,297",
  "667,118 801,194", "573,146 720,208", "720,385 805,360", "768,347 803,360", "763,409 893,373", "895,310 918,303",
  "763,292 763,347", "893,257 893,310", "763,409 763,473", "802,193 802,252", "921,154 921,388", "546,349 546,387",
  "546,387 763,473 894,437", "894,395 894,437", "636,319 636,383", "419,297 673,398 805,360", "568,357 568,395",
  "918,388 893,395",
];
const nodes = [[467,169],[634,235],[921,154],[419,233],[636,319],[419,297],[763,409],[763,473],[546,387],[755,87],[667,118],[569,147],[634,128],[802,193],[935,165],[1047,210],[1035,270],[894,437],[918,388],[568,395],[805,360],[893,310],[768,347],[893,373],[673,398]];

const Building = () => (
  <Scene viewBox="397 85 675 436">
    <defs>
      <pattern id="redgrid" width="9" height="7" patternUnits="userSpaceOnUse" patternTransform="skewY(20)">
        <rect width="9" height="7" fill="#f01a1a" />
        <path d="M0 0H9M0 0V7" stroke="#ff7a6a" strokeWidth="0.5" />
      </pattern>
    </defs>
    {/* far slabs & columns */}
    <FarColumn x={966} y1={232} y2={320} />
    <FarColumn x={1023} y1={217} y2={320} />
    <polygon points="918,156 935,165 1047,210 900,250 900,190" fill="#f8a81c" />
    <polygon points="918,212 1035,270 893,310 890,250" fill="#f8a81c" />
    <polyline points="935,165 1047,210 902,246" fill="none" stroke="#6a4a10" strokeWidth=".7" />
    <polyline points="1035,270 893,310" fill="none" stroke="#6a4a10" strokeWidth=".7" />
    <rect x="931" y="298" width="7" height="10" fill="#9a9a9a" />
    <ellipse cx="934" cy="312" rx="6" ry="4" fill="#5cec7c" />
    <Hatch x={967} y1={293} y2={316} n={3} dx={0} />
    {/* main silhouette */}
    <polygon fill="#f8a81c" points="467,169 569,147 634,128 667,118 755,87 921,154 921,388 893,395 894,437 763,473 546,387 546,349 419,297 419,233 467,218" />
    {/* window white */}
    <polygon fill="#fff" points="439,248 471,262 471,284 439,271" />
    <polygon fill="#f8a81c" points="439,282 453,286 471,279 471,295" />
    <polygon fill="#fff" points="870,176 906,166 906,174 871,184" />
    <g transform="translate(720 130) scale(.3333)">
      <polygon fill={RED} points="600,135 640,130 665,145 640,155 605,155" />
      <polygon fill={RED} points="600,250 640,255 680,280 710,315 780,345 850,375 905,405 830,430 745,465 690,480 620,492 575,480 567,460 590,435 640,415 680,385 640,360 600,350 575,335 568,300 575,270" />
      <polygon fill={RED} points="332,172 380,180 450,205 490,222 420,225 360,215 335,200" />
      <polygon fill={RED} points="388,160 410,162 480,200 440,190 392,170" />
      <polygon fill={RED} points="192,525 260,522 298,528 192,553" />
      <polygon fill={RED} points="192,707 240,715 298,715 192,748" />
      <polygon fill={RED} points="215,820 240,820 298,840 298,858 245,835" />
      <polygon fill={RED} points="130,885 157,895 157,985 130,1015" />
      <polygon fill={RED} points="520,805 522,900 495,870 485,845 500,835" />
    </g>
    <g transform="translate(396 85) scale(.3333)">
      <polygon fill={RED} points="430,270 470,255 520,252 600,280 700,320 800,360 845,393 750,385 660,370 560,325 470,298" />
      <polygon fill={RED} points="260,508 305,510 295,518 265,516" />
      <polygon fill={RED} points="335,497 400,505 440,525 468,550 420,545 370,525 345,515" />
      <polygon fill={RED} points="448,575 490,572 518,588 460,590" />
      <polygon fill={RED} points="490,560 520,568 525,575 500,570" />
      <polygon fill={RED} points="525,575 570,565 620,575 670,600 715,640 775,650 720,665 650,650 625,625 570,595" />
      <polygon fill={RED} points="775,458 800,465 790,470" />
    </g>
    <g transform="translate(396 300) scale(.3333)">
      <polygon fill={RED} points="712,90 735,115 738,160 720,215 715,240 700,200 700,120" />
    </g>
    {/* edges */}
    <g fill="none" stroke="#5a3a10" strokeWidth="0.7">
      {lines.map((l, i) => <polyline key={i} points={l} />)}
    </g>
    <g fill="#6a2a10">
      {nodes.map(([x, y], i) => <circle key={i} cx={x} cy={y} r="1" />)}
    </g>
    {/* windows */}
    <Win3D p="622,149 659,138 693,151 656,162" />
    <Win3D p="538,207 570,220 570,253 538,240" />
    <Win3D p="439,248 471,262 471,295 439,282" />
    <Win3D p="483,267 494,271 494,293 483,288" />
    <Win3D p="519,281 535,287 535,320 519,313" />
    <Win3D p="583,306 615,318 615,352 583,339" />
    <Win3D p="649,238 724,217 724,270 649,293" />
    <path d="M686 228V282" stroke="#2f7d70" strokeWidth="2" />
    <Win3D p="693,227 709,223 709,261 693,253" />
    <Win3D p="754,210 792,200 792,233 754,245" />
    <Win3D p="828,187 908,165 908,220 828,242" />
    <path d="M867 177V232M884 173V228" stroke="#2f7d70" strokeWidth="2" />
    <Win3D p="647,323 683,313 683,347 647,357" />
    <Win3D p="685,315 724,303 724,357 685,368" />
    <Win3D p="725,303 762,293 762,325 725,334" />
    <Win3D p="783,287 819,276 819,308 783,318" />
    <Win3D p="783,348 819,337 819,370 783,380" />
    <Win3D p="783,405 819,395 819,429 783,439" />
    <Win3D p="850,267 887,256 887,288 850,299" />
    <path d="M857 265V297" stroke="#2f7d70" strokeWidth="1.6" />
    <Win3D p="850,328 887,317 887,352 850,362" />
    <path d="M857 326V360" stroke="#2f7d70" strokeWidth="1.6" />
    <Win3D p="850,387 887,377 887,410 850,421" />
    {/* columns */}
    <Hatch x={432} y1={308} y2={381} n={9} dx={5} />
    <Hatch x={495} y1={339} y2={412} n={9} dx={15} />
    <Hatch x={608} y1={382} y2={457} n={9} dx={13} />
    <Column x={435} y1={305} y2={378} />
    <Column x={510} y1={335} y2={408} />
    <Column x={621} y1={380} y2={452} />
    <polygon fill="#f01414" points="647,431 635,444 631,440 632,453 645,452 640,448 651,436" />
    <Lab x={400} y={320} t="-729.80" />
    <Lab x={400} y={376} t="-743.72" />
    <Lab x={459} y={353} t="-1592.09" />
    <Lab x={458} y={408} t="-1606.01" />
    <Lab x={572} y={397} t="-1526.98" />
    <Lab x={571} y={452} t="-1540.90" />
    <Lab x={908} y={181} t="84." />
    <Lab x={941} y={225} t="47.30" />
    <Lab x={901} y={247} t="-190." />
    <Lab x={998} y={218} t="-81.43" />
    <Lab x={1013} y={266} t=".71" />
    <Lab x={994} y={283} t="-167.45" />
    <Lab x={900} y={301} t="-197.59" />
    <Lab x={937} y={300} t="170.64" />
    <Lab x={934} y={355} t="-4" />
  </Scene>
);

export default function App() {
  return (
    <Root>
      <Global />
      <Win>
        <TitleBar>
          <TitleIcon viewBox="0 0 14 14">
            <path d="M2 8l5-6 5 4-3 6z" fill="#4a78a8" />
            <path d="M2 8l4 4 3 0-3-6z" fill="#d8a030" />
          </TitleIcon>
          <TitleText>RFEM 5.01 - [Apartment building]</TitleText>
          <Caption>
            <CapBtn $w={19}>–</CapBtn>
            <CapBtn $w={18}>▫</CapBtn>
            <CapBtn $w={30} $red>x</CapBtn>
          </Caption>
        </TitleBar>
        <Inner>
          <MenuBar>
            <MenuLogo />
            {menu.map(([a, b, c, w]) => (
              <MenuItem key={b + c} $w={w}>{a}<u>{b}</u>{c}</MenuItem>
            ))}
            <MdiBtns>
              <MdiBtn>_</MdiBtn>
              <MdiBtn>❐</MdiBtn>
              <MdiBtn>×</MdiBtn>
            </MdiBtns>
          </MenuBar>
          <ToolRow $h={16}>
            <Tools from={208} items={t1a} />
            <Combo $w={148.5}>
              <span>RC2 - 10_EUROCODE</span>
              <Drop />
            </Combo>
            <Tools from={644} items={t1b} on={["eye", "move"]} />
          </ToolRow>
          <ToolRow $h={17}>
            <Tools from={208} items={t2} on={["surf"]} />
          </ToolRow>
          <Work>
            <Nav>
              <NavHead>
                Project Navigator - Results
                <b>ᵠ×</b>
              </NavHead>
              <TreeBox>
                <Tree>
                  {tree.map((n, i) => (
                    <TreeRow key={i}>
                      {n.c.split(" ").map((t, j) => <TreeCellView key={j} t={t} />)}
                      <TreeIcon>{n.i && <svg viewBox="0 0 14 14">{icons[n.i]}</svg>}</TreeIcon>
                      <TreeLabel $small={n.small}>{n.l}{n.s ? <Sub>{n.s}</Sub> : null}</TreeLabel>
                    </TreeRow>
                  ))}
                </Tree>
                <Scroll>
                  ▴
                  <Thumb />
                  <ScrollEnd>▾</ScrollEnd>
                </Scroll>
              </TreeBox>
              <NavTabs>
                <NavTab $w={36}><Icon k="data" />Data</NavTab>
                <NavTab $w={43}><Icon k="disp" />Display</NavTab>
                <NavTab $w={38}><Icon k="views" />Views</NavTab>
                <NavTab $w={43} $on><Icon k="surf" />Results</NavTab>
              </NavTabs>
            </Nav>
            <Main>
              <Viewport>
                <Building />
                <ViewInfo>
                  Members: Internal Forces N [kN]<br />
                  Surfaces: Design Internal Forces m-y,D,- [kNm/m]<br />
                  RC2 : 10_EUROCODE
                </ViewInfo>
              </Viewport>
              <TableHead>4.6 Members - Internal Forces<b>ᵠ×</b></TableHead>
              <TableTools>
                <Tools from={397} items={t3a} />
                <Combo $w={93}>
                  <span>RC2 - 10_EUROCODE</span>
                  <Drop />
                </Combo>
                <Tools from={661} items={t3b} on={["gridg"]} />
              </TableTools>
              <TableWrap>
                <Sheet>
                  <HeadGrid>
                    <Letter />
                    {"ABCDEFGHI".split("").map((l) => <Letter key={l} $on={l === "D"}>{l}</Letter>)}
                    <Letter />
                    <HeadCell $c="1" $r="2 / 4" $tight>Member<br />No.</HeadCell>
                    <HeadCell $c="2" $r="2">Node</HeadCell>
                    <HeadCell $c="2" $r="3">No.</HeadCell>
                    <HeadCell $c="3" $r="2">Location</HeadCell>
                    <HeadCell $c="3" $r="3">x [m]</HeadCell>
                    <HeadCell $c="4" $r="2 / 4" />
                    <HeadCell $c="5 / 8" $r="2" $b>Forces [kN]</HeadCell>
                    <HeadCell $c="8 / 11" $r="2" $b>Moments [kNm]</HeadCell>
                    <HeadCell $c="11" $r="2" />
                    {["N", "V_y", "V_z", "M_T", "M_y", "M_z"].map((h, i) => (
                      <HeadCell key={h} $c={String(5 + i)} $r="3"><S t={h} /></HeadCell>
                    ))}
                    <CommentHead $c="11" $r="3">Comment</CommentHead>
                  </HeadGrid>
                  {rowsData.map((r, i) => (
                    <DataRow key={i}>
                      <RowHead $sel={i === 1}>{i === 0 ? "1" : ""}</RowHead>
                      <DataCell $a="center">{i === 0 ? "1" : ""}</DataCell>
                      <DataCell>{i === 0 ? "0.000" : ""}</DataCell>
                      <DataCell $a="center"><S t={r.c} /></DataCell>
                      {[0, 1, 2, 3, 4, 5].map((c) => (
                        <DataCell key={c} $bold={r.b === c} $pink={c === 0 && r.pink}>
                          {c === 0 && r.v0 ? r.v0 : "0.00"}
                        </DataCell>
                      ))}
                      <DataCell $a="left">{i === 1 ? "LC1 LC3 LC2" : ""}</DataCell>
                    </DataRow>
                  ))}
                </Sheet>
                <GridScroll>
                  ▴
                  <Thumb />
                </GridScroll>
              </TableWrap>
              <SheetTabs>
                {tabsSheet.map(([t, w, on]) => <SheetTab key={t} $w={w} $on={on}>{t}</SheetTab>)}
                <SheetNav><span>|◂</span><span>◂</span></SheetNav>
              </SheetTabs>
            </Main>
          </Work>
          <StatusBar>
            <StatusText>Saves the current model.</StatusText>
            <StatusBtn $w={24}>SNAP</StatusBtn>
            <StatusBtn $w={25} $flat>GRID</StatusBtn>
            <StatusBtn $w={33}>CARTES</StatusBtn>
            <StatusBtn $w={31}>OSNAP</StatusBtn>
            <StatusBtn $w={31}>GLINES</StatusBtn>
            <StatusBtn $w={19}>DXF</StatusBtn>
            <StatusCell $w={103} />
            <StatusCell $w={37} />
            <StatusCell $w={49} />
            <StatusCell $w={48} />
          </StatusBar>
        </Inner>
      </Win>

      <Panel>
        <PanelHead>Panel<b>×</b></PanelHead>
        <PanelTitle>
          Design Internal Forces<br />
          m<Sub>y,D,-</Sub> [kNm/m]
        </PanelTitle>
        <LegendBox>
          <Bars>{legendColors.map((c) => <Bar key={c} $c={c} />)}</Bars>
          <Values>{legendVals.map((v) => <Value key={v}>{v}</Value>)}</Values>
        </LegendBox>
        <MaxMin>
          <span>Max</span><span>:</span><span>125.11</span>
          <span>Min</span><span>:</span><span>-447.82</span>
        </MaxMin>
        <PanelFoot>
          <ZoomBtn><Icon k="zoom" /></ZoomBtn>
          <PanelTabs>
            <PanelTab $on><Icon k="rainbow" /></PanelTab>
            <PanelTab><Icon k="ochre" /></PanelTab>
            <PanelTab><Icon k="hand" /></PanelTab>
            <PanelTab><Icon k="lines4" /></PanelTab>
          </PanelTabs>
        </PanelFoot>
      </Panel>

      <LogoBox>
        <LogoMark viewBox="0 0 70 70">
          <circle cx="35" cy="36" r="32.5" fill="none" stroke="#1b3a66" strokeWidth="2.2" />
          <path d="M18 42c-4-1-6-5-5-9 1-4 5-6 9-5 1-6 7-9 13-8 5 1 8 4 9 7 5-2 11 1 12 6 1 4-1 8-4 9z" fill="#1d3f6e" />
          <path d="M33 21c4-1 9 0 11 4" fill="none" stroke="#6f8cb0" strokeWidth="1" />
          <path d="M35 45c-4-6-8-8-12-8s-8 3-8 7 4 7 8 7 8-2 12-6zm0 0c4-6 8-8 12-8s8 3 8 7-4 7-8 7-8-2-12-6z" fill="#fff" stroke="#1d3f6e" strokeWidth="2.4" />
        </LogoMark>
        <LogoText>
          <LogoName>FileGit</LogoName>
          <LogoTag><i />Free &amp; Unlimited<i /></LogoTag>
        </LogoText>
      </LogoBox>
    </Root>
  );
}
